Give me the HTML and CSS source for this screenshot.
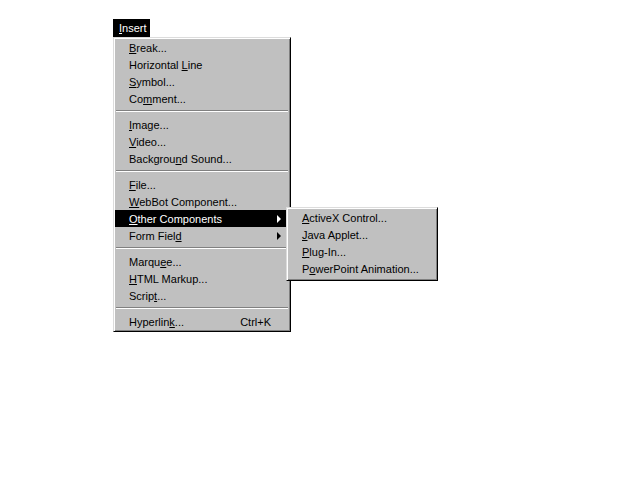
FILE: index.html
```html
<!DOCTYPE html>
<html>
<head>
<meta charset="utf-8">
<link rel="stylesheet" href="styles.css">
</head>
<body>
<div class="page">
  <div class="menubar"><span class="title"><u>I</u>nsert</span></div>
  <div class="menu main">
    <div class="item"><u>B</u>reak...</div>
    <div class="item">Horizontal <u>L</u>ine</div>
    <div class="item"><u>S</u>ymbol...</div>
    <div class="item">Co<u>m</u>ment...</div>
    <div class="sep"></div>
    <div class="item"><u>I</u>mage...</div>
    <div class="item"><u>V</u>ideo...</div>
    <div class="item">Backgrou<u>n</u>d Sound...</div>
    <div class="sep"></div>
    <div class="item"><u>F</u>ile...</div>
    <div class="item"><u>W</u>ebBot Component...</div>
    <div class="item active has-sub"><u>O</u>ther Components<span class="arrow"></span>
      <div class="menu sub">
        <div class="item"><u>A</u>ctiveX Control...</div>
        <div class="item"><u>J</u>ava Applet...</div>
        <div class="item"><u>P</u>lug-In...</div>
        <div class="item">P<u>o</u>werPoint Animation...</div>
      </div>
    </div>
    <div class="item has-sub">Form Fiel<u>d</u><span class="arrow"></span></div>
    <div class="sep"></div>
    <div class="item">Marqu<u>e</u>e...</div>
    <div class="item"><u>H</u>TML Markup...</div>
    <div class="item">Scrip<u>t</u>...</div>
    <div class="sep"></div>
    <div class="item">Hyperlin<u>k</u>...<span class="accel">Ctrl+K</span></div>
  </div>
</div>
</body>
</html>
```
FILE: styles.css
```css
html, body {
  margin: 0;
  padding: 0;
  background: #fff;
  width: 640px;
  height: 480px;
  overflow: hidden;
}
.page {
  padding: 19px 0 0 113px;
  font-family: "Liberation Sans", Arial, sans-serif;
  font-size: 11px;
  color: #000;
}
.menubar {
  display: flex;
  height: 18px;
}
.title {
  background: #000;
  color: #fff;
  width: 37px;
  padding-left: 6px;
  padding-top: 1px;
  box-sizing: border-box;
  line-height: 17px;
  height: 18px;
}
.menu {
  background: #c0c0c0;
  border: 1px solid;
  border-color: #dcdcdc #000 #000 #dcdcdc;
  box-shadow: inset 1px 1px 0 #fff, inset -1px -1px 0 #808080;
  box-sizing: border-box;
}
.main {
  width: 178px;
  padding: 1px 0 1px 0;
}
.item {
  position: relative;
  height: 17px;
  line-height: 17px;
  padding-top: 1px;
  box-sizing: border-box;
  margin: 0 1px;
  padding-left: 14px;
  white-space: nowrap;
}
.item u {
  text-decoration: underline;
  text-underline-offset: 1px;
}
.active {
  background: #000;
  color: #fff;
}
.sep {
  height: 9px;
  margin: 0 2px;
  position: relative;
}
.sep::before {
  content: "";
  position: absolute;
  left: 0;
  right: 0;
  top: 3px;
  height: 1px;
  background: #808080;
  border-bottom: 1px solid #fff;
}
.arrow {
  position: absolute;
  right: 8px;
  top: 5px;
  width: 0;
  height: 0;
  border-top: 4px solid transparent;
  border-bottom: 4px solid transparent;
  border-left: 4px solid #000;
}
.active .arrow {
  border-left-color: #fff;
}
.accel {
  position: absolute;
  right: 18px;
  top: 1px;
}
.sub {
  position: absolute;
  left: 171px;
  top: -3px;
  width: 152px;
  padding: 1px 0 3px 0;
  color: #000;
  z-index: 2;
}
.sub .item {
  padding-left: 14px;
}
```
